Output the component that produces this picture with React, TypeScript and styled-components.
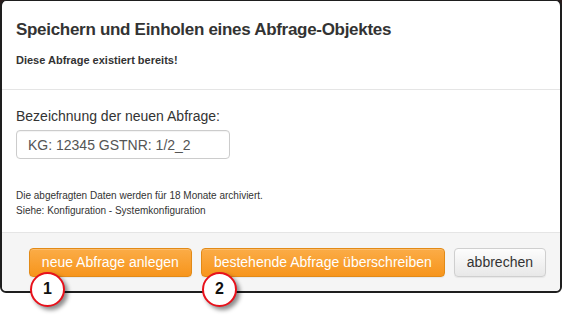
import styled, { createGlobalStyle } from "styled-components";

const GlobalStyle = createGlobalStyle`
  html, body {
    margin: 0;
    padding: 0;
  }
  body {
    font-family: "Liberation Sans", Arial, sans-serif;
    color: #333;
  }
`;

const Page = styled.div`
  width: 562px;
  height: 320px;
  background: linear-gradient(#2a1c1c 0, #2a1c1c 10px, #fff 10px);
  overflow: hidden;
`;

const Modal = styled.div`
  width: 562px;
  height: 293px;
  box-sizing: border-box;
  background: #fff;
  border: 2px solid #1e1e1e;
  border-top-width: 1px;
  border-radius: 6px;
  display: flex;
  flex-direction: column;
`;

const Header = styled.div`
  padding: 16px 14px 21px;
  border-bottom: 1px solid #e5e5e5;
`;

const Title = styled.h4`
  margin: 0;
  font-size: 17px;
  line-height: 26px;
  letter-spacing: -0.3px;
  font-weight: bold;
  color: #333;
`;

const Subtitle = styled.p`
  margin: 9px 0 0;
  font-size: 11px;
  line-height: 16px;
  font-weight: bold;
  color: #333;
`;

const Body = styled.div`
  flex: 1;
  padding: 17px 14px 0;
  border-bottom: 1px solid #e5e5e5;
`;

const Label = styled.label`
  display: block;
  font-size: 14px;
  line-height: 18px;
  color: #333;
`;

const Input = styled.input`
  display: block;
  margin-top: 5px;
  width: 214px;
  height: 29px;
  box-sizing: border-box;
  padding: 0 11px;
  border: 1px solid #ccc;
  border-radius: 4px;
  font-family: "Liberation Sans", Arial, sans-serif;
  font-size: 14px;
  color: #555;
  box-shadow: inset 0 1px 1px rgba(0, 0, 0, 0.05);
  outline: none;
`;

const Note = styled.div`
  margin-top: 29px;
  font-size: 10px;
  line-height: 15px;
  color: #333;
`;

const Footer = styled.div`
  height: 58px;
  box-sizing: border-box;
  background: #f5f5f5;
  display: flex;
  align-items: center;
  justify-content: flex-end;
  gap: 9px;
  padding: 0 14px 0 0;
  border-radius: 0 0 5px 5px;
`;

const ButtonWrap = styled.div`
  position: relative;
`;

const Button = styled.button<{ $primary?: boolean }>`
  height: 29px;
  box-sizing: border-box;
  padding: 0 12px;
  border-radius: 4px;
  font-family: "Liberation Sans", Arial, sans-serif;
  font-size: 14px;
  cursor: pointer;
  border: 1px solid ${(p) => (p.$primary ? "#e28a17" : "#cfcfcf")};
  color: ${(p) => (p.$primary ? "#fff" : "#333")};
  background: ${(p) =>
    p.$primary
      ? "linear-gradient(#fbac47, #f7951c)"
      : "linear-gradient(#fdfdfd, #e8e8e8)"};
  box-shadow: inset 0 1px 0 rgba(255, 255, 255, 0.2), 0 1px 1px rgba(0, 0, 0, 0.06);
`;

const Marker = styled.div`
  position: absolute;
  left: 1px;
  top: 24px;
  width: 35px;
  height: 35px;
  box-sizing: border-box;
  border-radius: 50%;
  border: 2px solid #e8111b;
  background: #fff;
  box-shadow: 3px 3px 4px rgba(0, 0, 0, 0.45);
  display: flex;
  align-items: center;
  justify-content: center;
  font-size: 16px;
  font-weight: bold;
  color: #111;
`;

export default function App() {
  return (
    <Page>
      <GlobalStyle />
      <Modal>
        <Header>
          <Title>Speichern und Einholen eines Abfrage-Objektes</Title>
          <Subtitle>Diese Abfrage existiert bereits!</Subtitle>
        </Header>
        <Body>
          <Label>Bezeichnung der neuen Abfrage:</Label>
          <Input defaultValue="KG: 12345 GSTNR: 1/2_2" />
          <Note>
            Die abgefragten Daten werden für 18 Monate archiviert.
            <br />
            Siehe: Konfiguration - Systemkonfiguration
          </Note>
        </Body>
        <Footer>
          <ButtonWrap>
            <Button $primary>neue Abfrage anlegen</Button>
            <Marker>1</Marker>
          </ButtonWrap>
          <ButtonWrap>
            <Button $primary>bestehende Abfrage überschreiben</Button>
            <Marker>2</Marker>
          </ButtonWrap>
          <ButtonWrap>
            <Button>abbrechen</Button>
          </ButtonWrap>
        </Footer>
      </Modal>
    </Page>
  );
}
